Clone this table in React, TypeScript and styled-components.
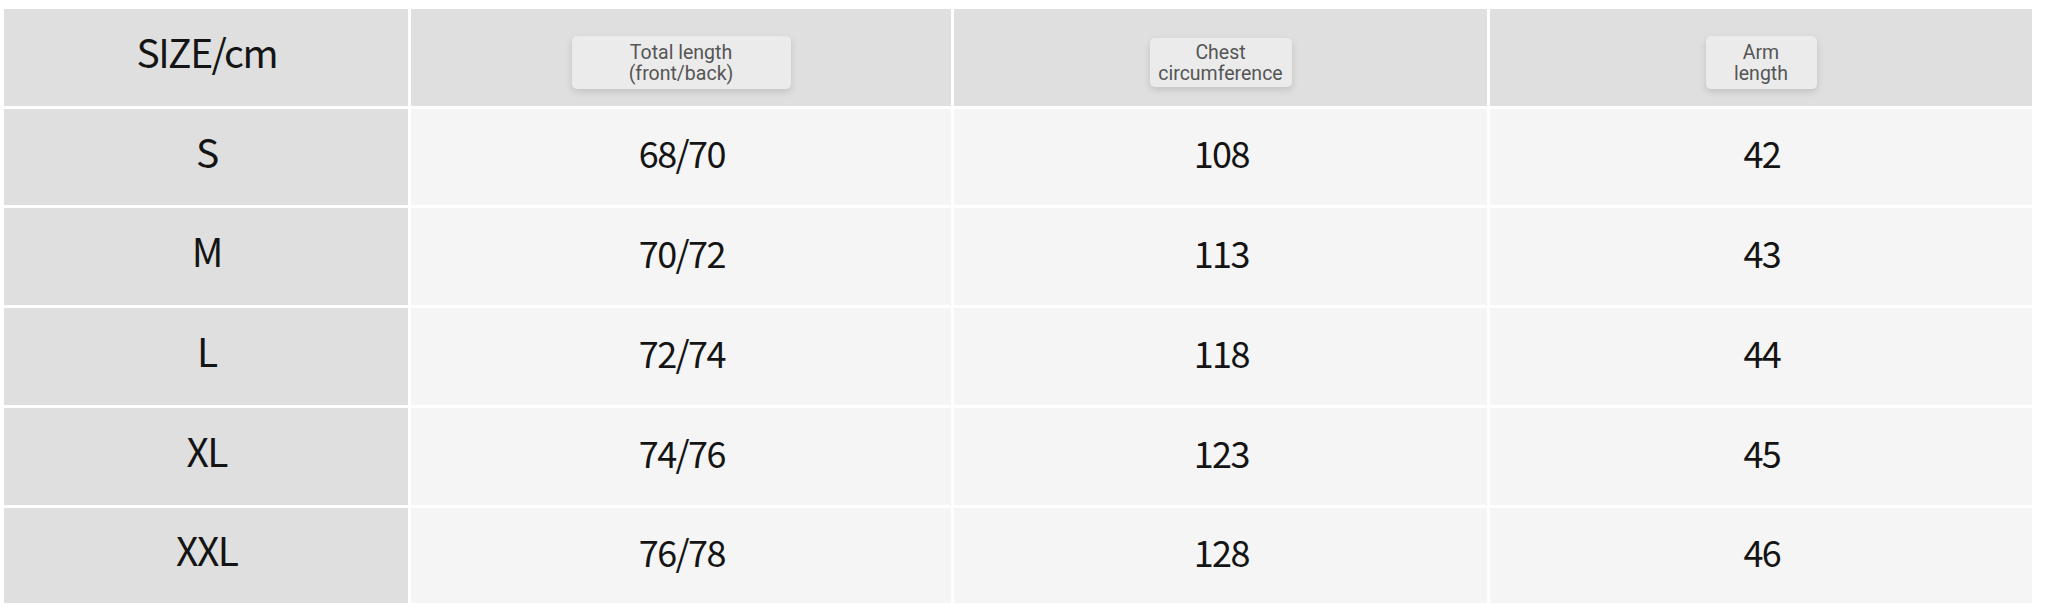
import React from "react";
import styled, { createGlobalStyle } from "styled-components";

const Global = createGlobalStyle`
  html, body {
    margin: 0;
    padding: 0;
    background: #ffffff;
  }
  body {
    font-family: "Noto Sans CJK SC", "Noto Sans", sans-serif;
  }
`;

const Page = styled.div`
  padding: 9px 16px 6px 4px;
`;

const Table = styled.div`
  display: grid;
  grid-template-columns: 404px 540px 533px 542px;
  grid-template-rows: 97px 96px 97px 97px 97px 95px;
  gap: 3px;
  width: 2028px;
`;

const Cell = styled.div<{ $shade?: boolean }>`
  display: flex;
  align-items: center;
  justify-content: center;
  background: ${(p) => (p.$shade ? "#dfdfdf" : "#f5f5f5")};
  color: #141414;
  font-family: "Noto Sans CJK SC", "Noto Sans", sans-serif;
`;

const SizeText = styled.span`
  font-size: 39px;
  line-height: 1;
  letter-spacing: -1.5px;
  padding-bottom: 12px;
  padding-left: 1.5px;
`;

const ValueText = styled.span`
  font-size: 36px;
  line-height: 1;
  letter-spacing: -1.6px;
  padding-bottom: 10px;
  padding-left: 1.6px;
`;

const HeadCell = styled(Cell)`
  padding-top: 10px;
  box-sizing: border-box;
`;

const Badge = styled.div<{ $w: number; $h: number }>`
  width: ${(p) => p.$w}px;
  height: ${(p) => p.$h}px;
  box-sizing: border-box;
  display: flex;
  flex-direction: column;
  align-items: center;
  justify-content: center;
  background: #ebebeb;
  border-radius: 5px;
  box-shadow: 0 3px 7px rgba(0, 0, 0, 0.13);
  font-family: Roboto, "Liberation Sans", sans-serif;
  font-size: 19.5px;
  line-height: 21px;
  color: #555555;
  text-align: center;
`;

const headers = [
  { lines: ["Total length", "(front/back)"], w: 219, h: 53 },
  { lines: ["Chest", "circumference"], w: 142, h: 49 },
  { lines: ["Arm", "length"], w: 111, h: 53 },
];

const rows: [string, string, string, string][] = [
  ["S", "68/70", "108", "42"],
  ["M", "70/72", "113", "43"],
  ["L", "72/74", "118", "44"],
  ["XL", "74/76", "123", "45"],
  ["XXL", "76/78", "128", "46"],
];

export default function App() {
  return (
    <>
      <Global />
      <Page>
        <Table>
          <Cell $shade>
            <SizeText>SIZE/cm</SizeText>
          </Cell>
          {headers.map((h) => (
            <HeadCell $shade key={h.lines[0]}>
              <Badge $w={h.w} $h={h.h}>
                {h.lines.map((l) => (
                  <span key={l}>{l}</span>
                ))}
              </Badge>
            </HeadCell>
          ))}
          {rows.map((r) => (
            <React.Fragment key={r[0]}>
              <Cell $shade>
                <SizeText>{r[0]}</SizeText>
              </Cell>
              {r.slice(1).map((v, i) => (
                <Cell key={i}>
                  <ValueText>{v}</ValueText>
                </Cell>
              ))}
            </React.Fragment>
          ))}
        </Table>
      </Page>
    </>
  );
}
